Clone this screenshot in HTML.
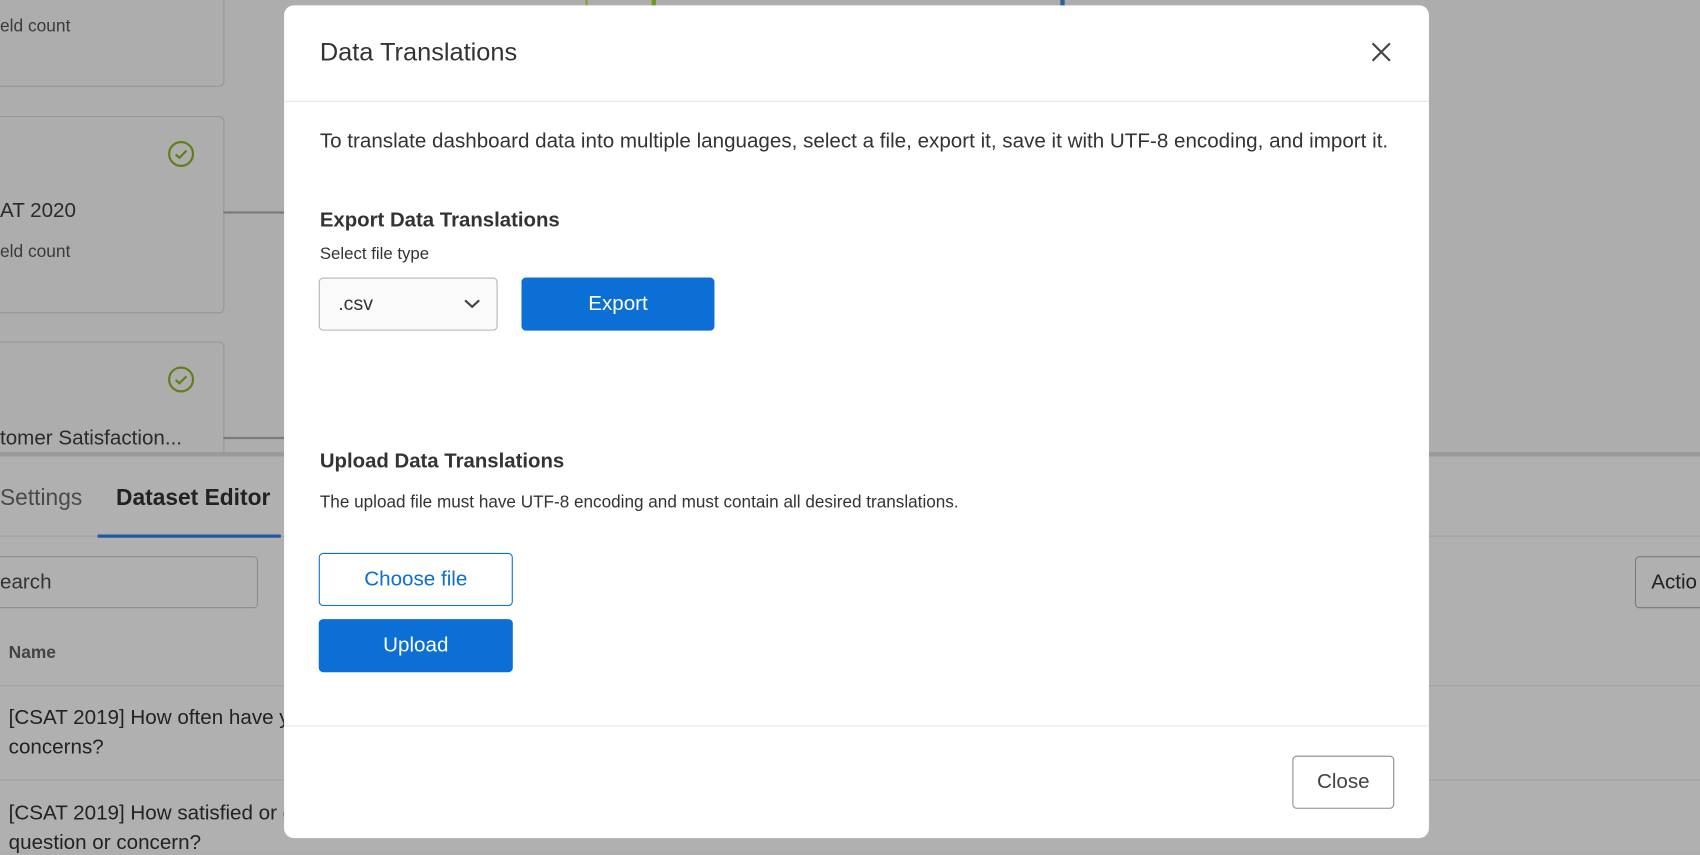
<!DOCTYPE html>
<html><head><meta charset="utf-8"><style>
html,body{margin:0;padding:0;width:1700px;height:850px;overflow:hidden;background:#adadad;font-family:"Liberation Sans",sans-serif;color:#222}
#s{position:absolute;left:0;top:0;width:1568px;height:784px;transform:scale(1.08418);transform-origin:0 0;}
.a{position:absolute}
.card{position:absolute;left:-20px;width:225px;border:1px solid #979797;border-radius:5px}
.t{position:absolute;white-space:nowrap}
.bg{color:#2a2a2a}
.btn{position:absolute;border-radius:4px;box-sizing:border-box;text-align:center;font-size:19px}
</style></head><body><div id="s">
<!-- background -->
<div class="card" style="top:-20px;height:98px"></div>
<div class="t bg" style="left:0;top:16px;font-size:16px;color:#3a3a3a">eld count</div>
<div class="card" style="top:107px;height:180px"></div>
<svg class="a" style="left:154px;top:129px" width="26" height="26" viewBox="0 0 26 26"><circle cx="13" cy="13" r="11" stroke="#5f7f16" stroke-width="2" fill="none"/><path d="M8 13.5L11.5 16.5L18 10" stroke="#5f7f16" stroke-width="2" fill="none"/></svg>
<div class="t bg" style="left:0;top:184px;font-size:19px">AT 2020</div>
<div class="t bg" style="left:0;top:224px;font-size:16px;color:#3a3a3a">eld count</div>
<div class="card" style="top:315px;height:120px"></div>
<svg class="a" style="left:154px;top:337px" width="26" height="26" viewBox="0 0 26 26"><circle cx="13" cy="13" r="11" stroke="#5f7f16" stroke-width="2" fill="none"/><path d="M8 13.5L11.5 16.5L18 10" stroke="#5f7f16" stroke-width="2" fill="none"/></svg>
<div class="t bg" style="left:0;top:394px;font-size:19px">tomer Satisfaction...</div>
<div class="a" style="left:206px;top:195px;width:60px;height:2px;background:#7a7a7a"></div>
<div class="a" style="left:206px;top:403px;width:60px;height:2px;background:#7a7a7a"></div>
<div class="a" style="left:540px;top:0;width:2px;height:6px;background:#8a9a40"></div>
<div class="a" style="left:601px;top:0;width:4px;height:6px;background:#6a9a20"></div>
<div class="a" style="left:978px;top:0;width:4px;height:6px;background:#2f5f9f"></div>
<div class="a" style="left:0;top:420px;width:1568px;height:364px;background:#b0b0b0"></div>
<div class="a" style="left:0;top:417px;width:1568px;height:4px;background:#9a9a9a"></div>
<div class="t" style="left:0;top:448px;font-size:21px;color:#4a4a4a">Settings</div>
<div class="t" style="left:107px;top:448px;font-size:21px;font-weight:bold;color:#222">Dataset Editor</div>
<div class="a" style="left:0;top:494px;width:1568px;height:1px;background:#a0a0a0"></div>
<div class="a" style="left:90px;top:493px;width:169px;height:3px;background:#1e5aa0"></div>
<div class="a" style="left:-10px;top:513px;width:248px;height:48px;border:1px solid #8c8c8c;border-radius:4px;box-sizing:border-box"></div>
<div class="t" style="left:0;top:527px;font-size:19px;color:#333">earch</div>
<div class="a" style="left:1508px;top:513px;width:80px;height:48px;border:1px solid #7a7a7a;border-radius:4px;box-sizing:border-box"></div>
<div class="t" style="left:1523px;top:527px;font-size:19px;color:#222">Actio</div>
<div class="t" style="left:8px;top:594px;font-size:16px;font-weight:bold;color:#444">Name</div>
<div class="a" style="left:0;top:632px;width:1568px;height:1px;background:#a0a0a0"></div>
<div class="t" style="left:8px;top:652px;font-size:19px;color:#222">[CSAT 2019] How often have y</div>
<div class="t" style="left:8px;top:679px;font-size:19px;color:#222">concerns?</div>
<div class="a" style="left:0;top:719px;width:1568px;height:1px;background:#a0a0a0"></div>
<div class="t" style="left:8px;top:740px;font-size:19px;color:#222">[CSAT 2019] How satisfied or d</div>
<div class="t" style="left:8px;top:767px;font-size:19px;color:#222">question or concern?</div>

<!-- modal -->
<div class="a" style="left:262px;top:5px;width:1056px;height:768px;background:#fff;border-radius:9px">
<div class="t" style="left:33px;top:30px;font-size:23.4px;color:#333">Data Translations</div>
<svg class="a" style="left:1003px;top:34px" width="18" height="18" viewBox="0 0 18 18"><path d="M1 1L17 17M17 1L1 17" stroke="#444" stroke-width="2"/></svg>
<div class="a" style="left:0;top:88px;width:1056px;height:1px;background:#e6e6e6"></div>
<div class="t" style="left:33px;top:115px;font-size:19px;color:#333">To translate dashboard data into multiple languages, select a file, export it, save it with UTF-8 encoding, and import it.</div>
<div class="t" style="left:33px;top:187px;font-size:18.8px;font-weight:bold;color:#333">Export Data Translations</div>
<div class="t" style="left:33px;top:221px;font-size:15.5px;color:#333">Select file type</div>
<div class="a" style="left:32px;top:251px;width:165px;height:49px;border:1px solid #b4b4b4;border-radius:4px;box-sizing:border-box;background:#fafafa"></div>
<div class="t" style="left:50px;top:265px;font-size:18px;color:#333">.csv</div>
<svg class="a" style="left:166px;top:270px" width="15" height="10" viewBox="0 0 15 10"><path d="M1 2L7.5 8L14 2" stroke="#444" stroke-width="2" fill="none"/></svg>
<div class="btn" style="left:219px;top:251px;width:178px;height:49px;background:#0b6fd5;color:#fff;line-height:49px">Export</div>
<div class="t" style="left:33px;top:409px;font-size:18.8px;font-weight:bold;color:#333">Upload Data Translations</div>
<div class="t" style="left:33px;top:450px;font-size:15.8px;color:#333">The upload file must have UTF-8 encoding and must contain all desired translations.</div>
<div class="btn" style="left:32px;top:505px;width:179px;height:49px;border:1px solid #0b6fd5;color:#0b6fd5;line-height:47px">Choose file</div>
<div class="btn" style="left:32px;top:566px;width:179px;height:49px;background:#0b6fd5;color:#fff;line-height:49px">Upload</div>
<div class="a" style="left:0;top:664px;width:1056px;height:1px;background:#e6e6e6"></div>
<div class="btn" style="left:930px;top:692px;width:94px;height:49px;border:1px solid #8a8a8a;color:#444;line-height:47px">Close</div>
</div>
</div></body></html>
